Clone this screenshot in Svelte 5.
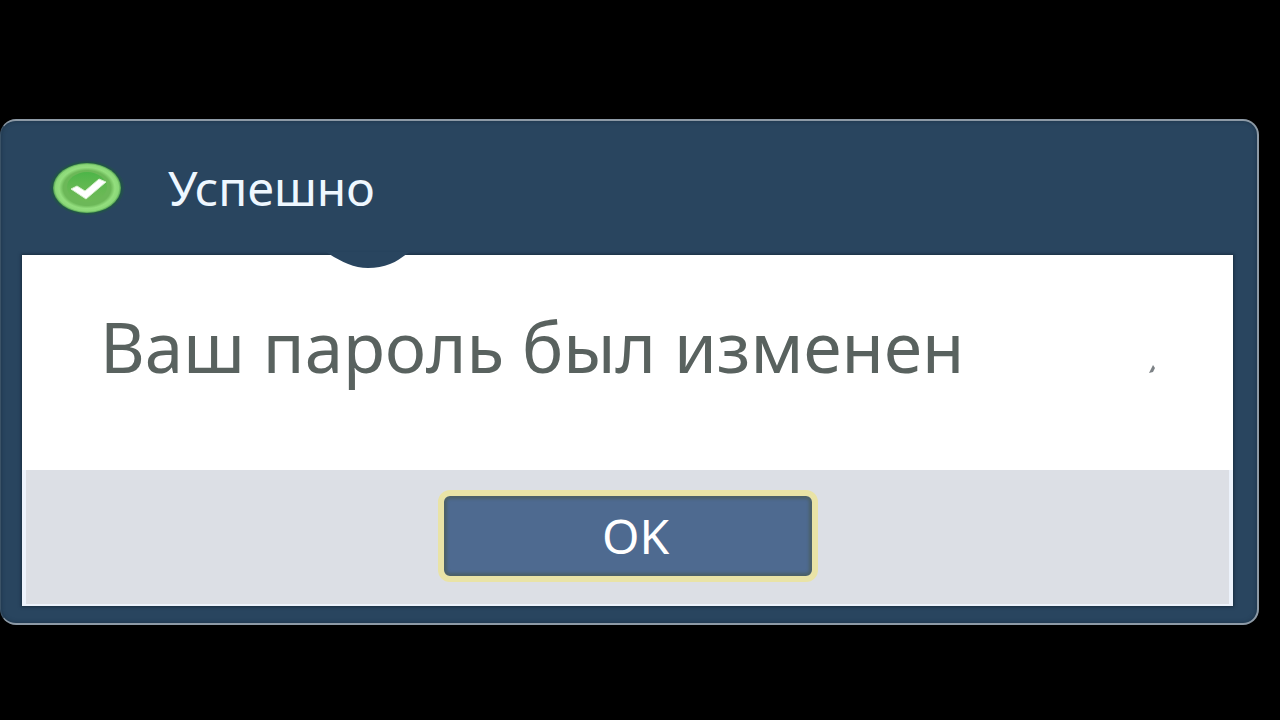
<script lang="ts">
    interface Props {
        title?: string;
        message?: string;
        onClose?: () => void;
    }

    let {
        title = "Успешно",
        message = "Ваш пароль был изменен",
        onClose = () => {},
    }: Props = $props();
</script>

<main class="screen">
    <div
        class="dialog"
        role="alertdialog"
        aria-labelledby="dialog-title"
        aria-describedby="dialog-message"
    >
        <header class="dialog-header">
            <svg class="status-icon" viewBox="0 0 76 56" aria-hidden="true">
                <defs>
                    <radialGradient id="rim">
                        <stop offset="0.86" stop-color="#1d5a3c" />
                        <stop offset="1" stop-color="#1d5a3c" stop-opacity="0" />
                    </radialGradient>
                    <radialGradient id="ring">
                        <stop offset="0.7" stop-color="#6cb858" />
                        <stop offset="0.82" stop-color="#93de7e" />
                        <stop offset="0.93" stop-color="#8bd878" />
                        <stop offset="1" stop-color="#4f9c50" />
                    </radialGradient>
                    <linearGradient id="fill" x1="0" y1="0" x2="0" y2="1">
                        <stop offset="0" stop-color="#4cb548" />
                        <stop offset="1" stop-color="#6fbb55" stop-opacity="0.4" />
                    </linearGradient>
                </defs>
                <ellipse cx="38" cy="28" rx="38" ry="28" fill="url(#rim)" />
                <ellipse cx="38" cy="28" rx="34" ry="25" fill="url(#ring)" />
                <ellipse cx="38" cy="27" rx="20" ry="15" fill="url(#fill)" />
                <path
                    d="M22 29 L28 26 L36 31 L50 19 L57 22 L37 39 Z"
                    fill="#fff"
                    stroke="#d5efcb"
                    stroke-width="1"
                    stroke-linejoin="round"
                />
            </svg>
            <h1 id="dialog-title">{title}</h1>
            <svg class="notch" viewBox="0 0 84 16" aria-hidden="true">
                <path d="M0 0 H84 C77 4 72 9 64 12 Q54 16 42 16 C27 16 14 9 0 0 Z" />
            </svg>
        </header>

        <div class="dialog-content">
            <div class="dialog-body">
                <p id="dialog-message">{message}</p>
                <svg class="tick" viewBox="0 0 6 8" aria-hidden="true">
                    <path d="M0 8 L4 0 L6 3 L4 7 Z" />
                </svg>
            </div>

            <footer class="dialog-footer">
                <button class="ok-button" onclick={onClose}>OK</button>
            </footer>
        </div>
    </div>
</main>

<style>
    :global(body) {
        background: #000;
    }

    .screen {
        box-sizing: border-box;
        min-height: 100vh;
        padding: 119px 21px 95px 0;
        font-family: "Noto Sans", "Open Sans", sans-serif;
    }

    .dialog {
        box-sizing: border-box;
        padding: 0 24px 17px 21px;
        background: #29455f;
        border: 2px solid #8d9aa6;
        border-left-width: 1px;
        border-left-color: #3b5266;
        border-radius: 16px;
        box-shadow: inset 0 0 4px #1c3347;
    }

    .dialog-header {
        position: relative;
        display: flex;
        align-items: center;
        gap: 43px;
        height: 134px;
        padding-left: 27px;
    }

    .status-icon {
        width: 76px;
        height: 56px;
    }

    h1 {
        margin: 0;
        font-size: 48px;
        font-weight: 400;
        line-height: 64px;
        color: #eef7ff;
    }

    /* hangs over the top edge of the white panel */
    .notch {
        position: absolute;
        left: 304px;
        bottom: -13px;
        width: 84px;
        height: 16px;
        fill: #29455f;
    }

    .dialog-content {
        background: #fff;
        box-shadow: 0 0 3px 1px #182d40;
    }

    .dialog-body {
        display: flex;
        align-items: center;
        justify-content: space-between;
        height: 215px;
        padding: 0 78px;
    }

    #dialog-message {
        margin: 0 0 34px;
        font-size: 69px;
        line-height: 96px;
        color: #59625f;
        white-space: nowrap;
    }

    .tick {
        width: 6px;
        height: 8px;
        margin-top: 12px;
        fill: #7d8286;
    }

    .dialog-footer {
        display: flex;
        justify-content: center;
        padding: 20px 0 22px;
        background: #dcdfe5;
        border: solid #edf3fc;
        border-width: 0 4px 2px 4px;
    }

    .ok-button {
        box-sizing: border-box;
        width: 380px;
        height: 92px;
        padding: 0 0 0 16px;
        border: 6px solid #e9e3a6;
        border-radius: 12px;
        background: #4e6a90;
        box-shadow: inset 0 0 3px 3px #4b6068;
        font-family: inherit;
        font-size: 48px;
        line-height: 64px;
        color: #fff;
        cursor: pointer;
    }
</style>
